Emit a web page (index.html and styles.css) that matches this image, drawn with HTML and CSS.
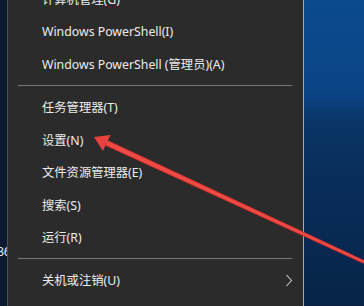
FILE: index.html
```html
<!DOCTYPE html>
<html lang="zh-CN">
<head>
<meta charset="utf-8">
<link rel="stylesheet" href="styles.css">
</head>
<body>
<div class="screen">
  <div class="strip"><span class="strip-text">36</span></div>
  <div class="menu">
    <div class="list">
      <div class="item">计算机管理(G)</div>
      <div class="item">Windows PowerShell(I)</div>
      <div class="item">Windows PowerShell (管理员)(A)</div>
      <div class="sep"></div>
      <div class="item">任务管理器(T)</div>
      <div class="item">设置(N)</div>
      <div class="item">文件资源管理器(E)</div>
      <div class="item">搜索(S)</div>
      <div class="item">运行(R)</div>
      <div class="sep"></div>
      <div class="item sub">关机或注销(U)<svg class="chev" width="8" height="13" viewBox="0 0 8 13"><polyline points="1.5,1 6.5,6.5 1.5,12" fill="none" stroke="#c8c8c8" stroke-width="1.1"/></svg></div>
      <div class="item">桌面(D)</div>
    </div>
  </div>
  <div class="desk"></div>
  <svg class="arrow" width="364" height="306" viewBox="0 0 364 306">
    <polygon points="105.4,145.7 108,140.3 364.6,260.3 363.4,263.7" fill="#c22b2b"/>
    <polygon points="105.8,145 107.6,141 364.5,261 363.7,263" fill="#ee4b45"/>
    <polygon points="94,137 110.5,134.9 102.9,151.1" fill="#e8413f"/>
  </svg>
</div>
</body>
</html>
```

FILE: styles.css
```css
html, body {
  margin: 0;
  padding: 0;
}
.screen {
  position: relative;
  width: 364px;
  height: 306px;
  overflow: hidden;
  display: flex;
  font-family: "Noto Sans", "Noto Sans CJK SC", sans-serif;
  background: #0a1a30;
}
.strip {
  width: 7px;
  flex: none;
  overflow: hidden;
  background: #0b1a2e;
}
.strip-text {
  display: block;
  margin-top: 243px;
  margin-left: -3px;
  color: #e8e8e8;
  font-size: 12.5px;
  letter-spacing: -0.5px;
  white-space: nowrap;
}
.menu {
  width: 295px;
  flex: none;
  background: #2b2b2b;
  border-left: 1px solid #4d4d4d;
  border-right: 1px solid #a8a8a8;
  overflow: hidden;
}
.list {
  margin-top: -17.25px;
  display: flex;
  flex-direction: column;
}
.item {
  height: 32.5px;
  flex: none;
  display: flex;
  align-items: center;
  padding-left: 34px;
  padding-right: 10px;
  color: #ececec;
  font-size: 12.3px;
  white-space: nowrap;
}
.sub {
  justify-content: space-between;
}
.chev {
  display: block;
}
.sep {
  height: 10.5px;
  flex: none;
  display: flex;
  align-items: center;
  margin: 0 11px 0 10px;
}
.sep::before {
  content: "";
  display: block;
  width: 100%;
  height: 1px;
  background: #777;
}
.desk {
  flex: 1;
  background: linear-gradient(180deg, #0b4a8e 0%, #0a4586 30%, #0a3566 40%, #092d5a 60%, #072447 100%);
}
.arrow {
  position: absolute;
  left: 0;
  top: 0;
}
```
